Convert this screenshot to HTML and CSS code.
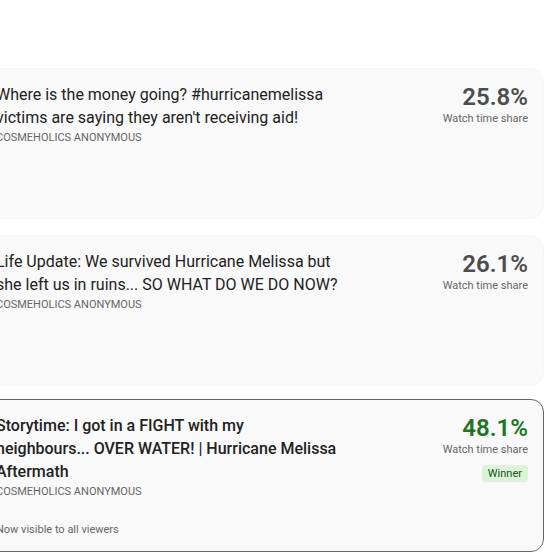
FILE: index.html
```html
<!DOCTYPE html>
<html>
<head>
<meta charset="utf-8">
<link rel="stylesheet" href="styles.css">
</head>
<body>
<div class="list">
  <div class="card">
    <div class="info">
      <div class="title">Where is the money going? #hurricanemelissa victims are saying they aren't receiving aid!</div>
      <div class="channel">COSMEHOLICS ANONYMOUS</div>
    </div>
    <div class="stats">
      <div class="pct">25.8%</div>
      <div class="label">Watch time share</div>
    </div>
  </div>
  <div class="card">
    <div class="info">
      <div class="title">Life Update: We survived Hurricane Melissa but she left us in ruins... SO WHAT DO WE DO NOW?</div>
      <div class="channel">COSMEHOLICS ANONYMOUS</div>
    </div>
    <div class="stats">
      <div class="pct">26.1%</div>
      <div class="label">Watch time share</div>
    </div>
  </div>
  <div class="card card-winner">
    <div class="info">
      <div class="title">Storytime: I got in a FIGHT with my neighbours... OVER WATER! | Hurricane Melissa Aftermath</div>
      <div class="channel">COSMEHOLICS ANONYMOUS</div>
      <div class="note">Now visible to all viewers</div>
    </div>
    <div class="stats">
      <div class="pct">48.1%</div>
      <div class="label">Watch time share</div>
      <div class="badge">Winner</div>
    </div>
  </div>
</div>
</body>
</html>
```

FILE: styles.css
```css
html, body {
  margin: 0;
  padding: 0;
  background: #ffffff;
  font-family: Roboto, "Noto Sans", "Liberation Sans", sans-serif;
  overflow: hidden;
}

.list {
  margin: 68px 0 0 -21px;
  width: 565px;
  display: flex;
  flex-direction: column;
  gap: 16px;
}

.card {
  box-sizing: border-box;
  min-height: 151px;
  background: #f9f9f9;
  border: 1px solid #f6f6f6;
  border-radius: 14px;
  padding: 14px 15px 14px 16px;
  display: grid;
  grid-template-columns: 342px 1fr;
  column-gap: 16px;
  align-items: start;
}

.card-winner {
  margin-top: -3px;
  border-color: #666666;
  border-radius: 13px;
}

.info {
  display: flex;
  flex-direction: column;
}

.title {
  font-size: 16px;
  line-height: 23px;
  color: #222222;
}

.card-winner .title {
  font-weight: 500;
}

.channel {
  margin-top: 2px;
  font-size: 11px;
  line-height: 14px;
  color: #666666;
  text-transform: uppercase;
}

.note {
  margin-top: 24px;
  font-size: 11px;
  line-height: 14px;
  color: #666666;
}

.stats {
  display: flex;
  flex-direction: column;
  align-items: flex-end;
  text-align: right;
}

.pct {
  font-size: 24px;
  line-height: 29px;
  font-weight: 600;
  color: #4d4d4d;
}

.card-winner .pct {
  color: #1b771b;
}

.label {
  font-size: 11px;
  line-height: 14px;
  color: #666666;
}

.badge {
  margin-top: 8px;
  padding: 2px 6px;
  font-size: 11px;
  line-height: 13px;
  color: #1b4d1b;
  background: #d9f5d6;
  border-radius: 3px;
}
```
